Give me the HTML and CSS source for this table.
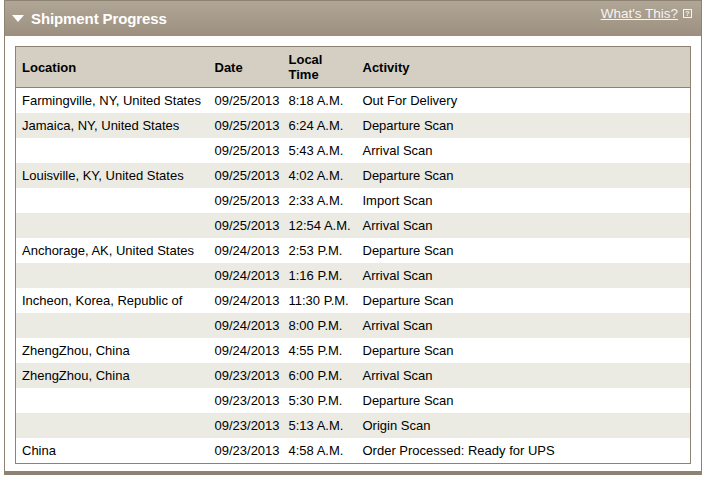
FILE: index.html
```html
<!DOCTYPE html>
<html>
<head>
<meta charset="utf-8">
<link rel="stylesheet" href="styles.css">
</head>
<body>
<div class="panel">
  <div class="panel-head">
    <div class="title"><span class="tri"></span>Shipment Progress</div>
    <div class="help"><a href="#">What's This?</a><span class="qbox">?</span></div>
  </div>
  <div class="panel-body">
    <table class="prog">
      <colgroup><col class="c1"><col class="c2"><col class="c3"><col class="c4"></colgroup>
      <thead>
        <tr><th>Location</th><th>Date</th><th>Local<br>Time</th><th>Activity</th></tr>
      </thead>
      <tbody>
        <tr><td>Farmingville, NY, United States</td><td>09/25/2013</td><td>8:18 A.M.</td><td>Out For Delivery</td></tr>
        <tr class="alt"><td>Jamaica, NY, United States</td><td>09/25/2013</td><td>6:24 A.M.</td><td>Departure Scan</td></tr>
        <tr><td></td><td>09/25/2013</td><td>5:43 A.M.</td><td>Arrival Scan</td></tr>
        <tr class="alt"><td>Louisville, KY, United States</td><td>09/25/2013</td><td>4:02 A.M.</td><td>Departure Scan</td></tr>
        <tr><td></td><td>09/25/2013</td><td>2:33 A.M.</td><td>Import Scan</td></tr>
        <tr class="alt"><td></td><td>09/25/2013</td><td>12:54 A.M.</td><td>Arrival Scan</td></tr>
        <tr><td>Anchorage, AK, United States</td><td>09/24/2013</td><td>2:53 P.M.</td><td>Departure Scan</td></tr>
        <tr class="alt"><td></td><td>09/24/2013</td><td>1:16 P.M.</td><td>Arrival Scan</td></tr>
        <tr><td>Incheon, Korea, Republic of</td><td>09/24/2013</td><td>11:30 P.M.</td><td>Departure Scan</td></tr>
        <tr class="alt"><td></td><td>09/24/2013</td><td>8:00 P.M.</td><td>Arrival Scan</td></tr>
        <tr><td>ZhengZhou, China</td><td>09/24/2013</td><td>4:55 P.M.</td><td>Departure Scan</td></tr>
        <tr class="alt"><td>ZhengZhou, China</td><td>09/23/2013</td><td>6:00 P.M.</td><td>Arrival Scan</td></tr>
        <tr><td></td><td>09/23/2013</td><td>5:30 P.M.</td><td>Departure Scan</td></tr>
        <tr class="alt"><td></td><td>09/23/2013</td><td>5:13 A.M.</td><td>Origin Scan</td></tr>
        <tr><td>China</td><td>09/23/2013</td><td>4:58 A.M.</td><td>Order Processed: Ready for UPS</td></tr>
      </tbody>
    </table>
  </div>
</div>
</body>
</html>
```

FILE: styles.css
```css
html, body {
  margin: 0;
  padding: 0;
  background: #ffffff;
}
body {
  font-family: "Liberation Sans", Arial, Helvetica, sans-serif;
  font-size: 13px;
  color: #000;
}
.panel {
  margin-left: 4px;
  width: 696px;
  border: 1px solid #8e8373;
  border-bottom: 4px solid #8e8373;
  padding-bottom: 7px;
}
.panel-head {
  height: 35px;
  background: linear-gradient(to bottom, #b1a796 0%, #9c8f7f 100%);
  display: flex;
  justify-content: space-between;
  align-items: center;
  padding: 0 9px 0 7px;
}
.title {
  display: flex;
  align-items: center;
  color: #ffffff;
  font-weight: bold;
  font-size: 15px;
  letter-spacing: -0.1px;
  margin-top: -1px;
}
.tri {
  width: 0;
  height: 0;
  border-left: 6px solid transparent;
  border-right: 6px solid transparent;
  border-top: 7px solid #ffffff;
  margin-right: 7px;
  margin-top: 1px;
}
.help {
  display: flex;
  align-items: center;
  margin-top: -10px;
}
.help a {
  color: #f4f4f4;
  text-decoration: underline;
  font-size: 13.5px;
}
.qbox {
  display: inline-flex;
  align-items: center;
  justify-content: center;
  width: 7px;
  height: 7px;
  border: 1px solid #f4f4f4;
  color: #f4f4f4;
  font-size: 7px;
  font-weight: bold;
  line-height: 7px;
  margin-left: 5px;
}
.panel-body {
  padding: 10px 10px 0 10px;
}
.prog {
  width: 676px;
  border-collapse: collapse;
  table-layout: fixed;
  border: 1px solid #8e8373;
}
.c1 { width: 192px; }
.c2 { width: 74px; }
.c3 { width: 74px; }
.prog th {
  background: #d5cec2;
  text-align: left;
  font-weight: bold;
  height: 40px;
  padding: 0 7px;
  border-bottom: 1px solid #8e8373;
  line-height: 15px;
  vertical-align: middle;
}
.prog td {
  height: 25px;
  padding: 0 7px;
  white-space: nowrap;
  vertical-align: middle;
}
.prog th:first-child,
.prog td:first-child {
  padding-left: 6px;
}
.prog tr.alt td {
  background: #ebebe4;
}
```
